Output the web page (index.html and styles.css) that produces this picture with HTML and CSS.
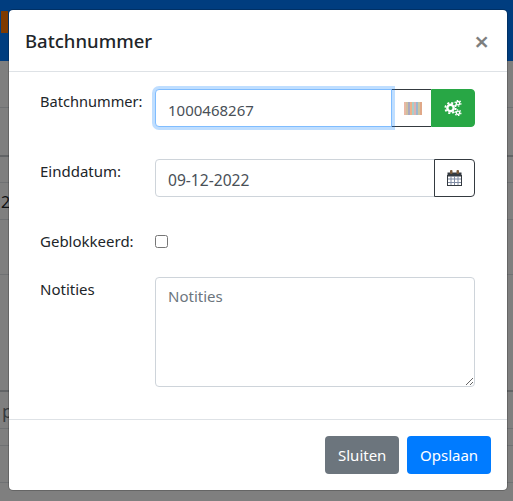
FILE: index.html
```html
<!DOCTYPE html>
<html lang="nl">
<head>
<meta charset="utf-8">
<title>Batchnummer</title>
<link rel="stylesheet" href="styles.css">
</head>
<body>
<div class="page">
  <header class="nav"><span class="logo"></span></header>
  <div class="line h47"></div>
  <div class="line h49 thick"></div>
  <div class="line h26"></div>
  <div class="line h37 cell">2</div>
  <div class="line h55"></div>
  <div class="line h117 thick"></div>
  <div class="line h37 cell cell-muted">p</div>
  <div class="line h17"></div>
  <div class="line h37"></div>
</div>
<div class="backdrop"></div>
<div class="modal">
  <div class="modal-header">
    <h5 class="modal-title">Batchnummer</h5>
    <button class="close" type="button">×</button>
  </div>
  <form class="modal-body">
    <div class="row row-batch">
      <label class="lbl">Batchnummer:</label>
      <div class="group">
        <input class="field focus" type="text" value="1000468267">
        <button class="addon barcode" type="button">
          <svg width="18" height="13" viewBox="0 0 18 13">
            <rect x="0" width="2" height="13" fill="#eab8a4"/>
            <rect x="2" width="2" height="13" fill="#cfc0a0"/>
            <rect x="4" width="2" height="13" fill="#a9a9c0"/>
            <rect x="6" width="2" height="13" fill="#eeb088"/>
            <rect x="8" width="2" height="13" fill="#a8cfc9"/>
            <rect x="10" width="2" height="13" fill="#e0b0b0"/>
            <rect x="12" width="2" height="13" fill="#98b8d0"/>
            <rect x="14" width="2" height="13" fill="#cfc4a0"/>
            <rect x="16" width="2" height="13" fill="#e0a888"/>
          </svg>
        </button>
        <button class="addon cogs" type="button">
          <svg width="18" height="16" viewBox="0 0 18 16">
            <g fill="none" stroke="#fff">
              <circle cx="6.5" cy="8" r="3.2" stroke-width="2.4"/>
              <circle cx="6.5" cy="8" r="5.2" stroke-width="1.8" stroke-dasharray="2.1 2"/>
              <circle cx="14" cy="3.2" r="1.7" stroke-width="1.4"/>
              <circle cx="14" cy="3.2" r="2.9" stroke-width="1.3" stroke-dasharray="1.5 1.5"/>
              <circle cx="14" cy="12.8" r="1.7" stroke-width="1.4"/>
              <circle cx="14" cy="12.8" r="2.9" stroke-width="1.3" stroke-dasharray="1.5 1.5"/>
            </g>
          </svg>
        </button>
      </div>
    </div>
    <div class="row row-date">
      <label class="lbl">Einddatum:</label>
      <div class="group">
        <input class="field field-date" type="text" value="09-12-2022">
        <button class="addon calendar" type="button">
          <svg width="15" height="16" viewBox="0 0 15 16">
            <rect x="0.5" y="2.5" width="14" height="4" fill="#343a40"/>
            <rect x="3" y="0" width="2.5" height="4" rx="1" fill="#7a5a3a"/>
            <rect x="9.5" y="0" width="2.5" height="4" rx="1" fill="#7a5a3a"/>
            <g fill="none" stroke="#343a40" stroke-width="1">
              <rect x="0.5" y="5.5" width="14" height="10"/>
              <path d="M1 9h13M1 12.5h13M4 6v9M7.5 6v9M11 6v9" stroke="#7f8ba3"/>
            </g>
          </svg>
        </button>
      </div>
    </div>
    <div class="row row-check">
      <label class="lbl">Geblokkeerd:</label>
      <input class="check" type="checkbox">
    </div>
    <div class="row row-notes">
      <label class="lbl">Notities</label>
      <textarea class="field notes" placeholder="Notities"></textarea>
    </div>
  </form>
  <div class="modal-footer">
    <button class="btn btn-grey" type="button">Sluiten</button>
    <button class="btn btn-blue" type="button">Opslaan</button>
  </div>
</div>
</body>
</html>
```
FILE: styles.css
```css
* { box-sizing: border-box; }
html, body { margin: 0; height: 501px; overflow: hidden; }
body {
  position: relative;
  background: #fff;
  color: #212529;
  font-family: "Noto Sans", "Open Sans", sans-serif;
  font-size: 15px;
  line-height: 24px;
}
.nav { height: 61px; background: #007bff; padding: 11px 0 0 1px; }
.logo { display: block; width: 7px; height: 22px; background: #fd7400; }
.line { border-bottom: 1px solid #dee2e6; }
.thick { border-bottom-width: 2px; border-bottom-color: #c4c8cc; }
.h17 { height: 17px; }
.h26 { height: 26px; }
.h37 { height: 37px; }
.h47 { height: 47px; }
.h49 { height: 49px; }
.h55 { height: 55px; }
.h117 { height: 117px; }
.cell { padding: 7px 0 0 1px; font-size: 16px; }
.cell-muted { padding-left: 2px; color: #6c757d; font-size: 18px; }

.backdrop { position: absolute; inset: 0; background: rgba(0, 0, 0, .5); }
.modal {
  position: absolute;
  top: 9px;
  left: 8px;
  width: 500px;
  height: 482px;
  display: flex;
  flex-direction: column;
  background: #fff;
  border: 1px solid rgba(0, 0, 0, .2);
  border-radius: 5px;
  background-clip: padding-box;
}
.modal-header {
  height: 62px;
  flex: none;
  display: flex;
  align-items: center;
  justify-content: space-between;
  padding: 0 18px 0 16px;
  border-bottom: 1px solid #dee2e6;
}
.modal-title { margin: 0; font-size: 18.5px; font-weight: 500; line-height: 30px; }
.close {
  padding: 0;
  border: 0;
  background: none;
  color: #000;
  opacity: .5;
  font: 600 26px/24px "Noto Sans", sans-serif;
}
.modal-body { flex: 1; padding: 17px 32px 0 31px; }
.row { display: flex; }
.row-date { margin-top: 32px; }
.row-check { margin-top: 32px; align-items: center; height: 24px; }
.row-notes { margin-top: 24px; }
.lbl { width: 115px; flex: none; }
.row-batch .lbl { font-size: 14.6px; }
.group { flex: 1; min-width: 0; display: flex; height: 38px; }
.field {
  display: block;
  flex: 1;
  width: 0;
  min-width: 0;
  height: 38px;
  padding: 8px 12px 4px;
  border: 1px solid #ced4da;
  border-radius: 4px 0 0 4px;
  background: #fff;
  color: #495057;
  font: inherit;
  font-size: 15px;
  line-height: 24px;
  outline: 0;
}
.field-date { font-size: 15.6px; }
.field::placeholder { color: #6c757d; opacity: 1; }
.focus {
  position: relative;
  z-index: 1;
  border-color: #80bdff;
  box-shadow: 0 0 0 3px rgba(0, 123, 255, .25);
}
.addon {
  display: flex;
  flex: none;
  align-items: center;
  justify-content: center;
  height: 38px;
  padding: 0;
  border: 1px solid #343a40;
  background: #fff;
}
.barcode { width: 40px; margin-left: -1px; padding-left: 2px; border-right: 0; }
.cogs {
  width: 44px;
  border-color: #28a745;
  border-radius: 0 4px 4px 0;
  background: #28a745;
}
.calendar { width: 41px; margin-left: -1px; border-radius: 0 4px 4px 0; }
.check { width: 13px; height: 13px; margin: 0; }
.notes {
  flex: 1;
  height: 110px;
  padding: 6px 12px;
  border-radius: 4px;
  resize: vertical;
}
.modal-footer {
  height: 71px;
  flex: none;
  display: flex;
  justify-content: flex-end;
  gap: 8px;
  padding: 16px;
  border-top: 1px solid #dee2e6;
}
.btn {
  height: 38px;
  padding: 0 13px;
  border: 0;
  border-radius: 4px;
  color: #fff;
  font: inherit;
  font-size: 15px;
}
.btn-grey { width: 74px; background: #6c757d; }
.btn-blue { width: 84px; background: #007bff; }
```
